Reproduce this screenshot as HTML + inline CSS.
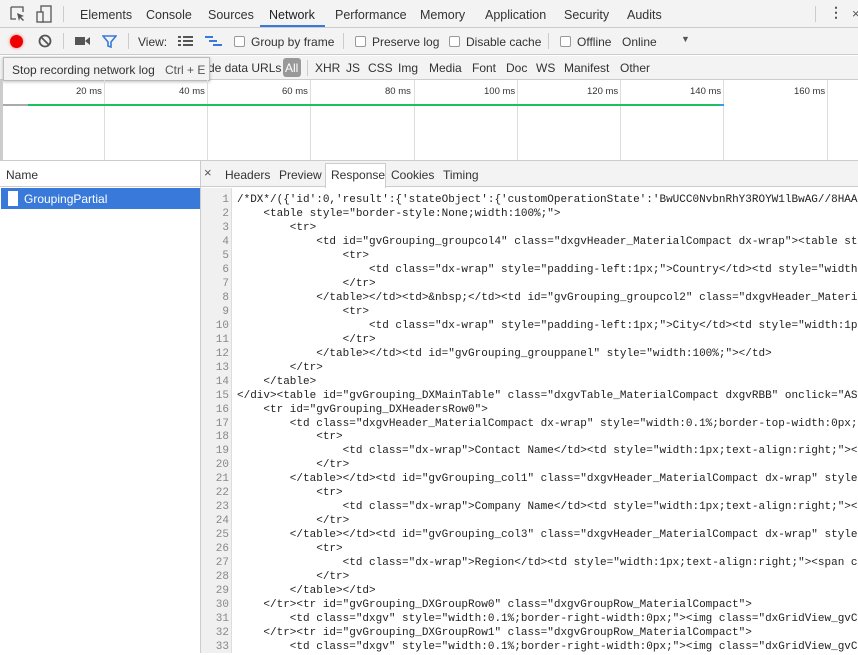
<!DOCTYPE html>
<html><head><meta charset="utf-8"><style>
*{box-sizing:border-box;margin:0;padding:0}
body{width:858px;height:653px;overflow:hidden;background:#fff;font-family:"Liberation Sans",sans-serif;font-size:12px;color:#333;position:relative}
.abs{position:absolute}
.t{position:absolute;white-space:nowrap}
.code{font-family:"Liberation Mono",monospace;font-size:11px;color:#222;white-space:pre;position:absolute;left:237px;top:194px;line-height:13.97px}
.nums{font-family:"Liberation Mono",monospace;font-size:11px;color:#888;white-space:pre;position:absolute;left:200px;width:29px;text-align:right;top:194px;line-height:13.97px}
.cb{position:absolute;width:11px;height:11px;border:1px solid #999;border-radius:2px;background:#fff}
.vsep{position:absolute;width:1px;background:#ccc}
</style></head><body>
<div class="abs" style="left:0;top:0;width:858px;height:28px;background:#f3f3f3;border-bottom:1px solid #ccc"></div>
<svg class="abs" style="left:10px;top:6px" width="16" height="16" viewBox="0 0 16 16"><path d="M1 1h12v5M1 1v12h5" fill="none" stroke="#555" stroke-width="1.3"/><path d="M7 7l7 3-3 1 3 3-1 1-3-3-1 3z" fill="#555"/></svg>
<svg class="abs" style="left:36px;top:5px" width="16" height="18" viewBox="0 0 16 18"><rect x="5" y="1" width="10" height="16" fill="none" stroke="#555" stroke-width="1.3"/><rect x="1" y="7" width="6" height="10" fill="#f3f3f3" stroke="#555" stroke-width="1.3"/></svg>
<div class="vsep" style="left:63px;top:6px;height:16px"></div>
<div class="t" style="left:80px;top:8px;font-size:12.5px">Elements</div>
<div class="t" style="left:146px;top:8px;font-size:12.5px">Console</div>
<div class="t" style="left:208px;top:8px;font-size:12.5px">Sources</div>
<div class="t" style="left:269px;top:8px;font-size:12.5px;color:#222">Network</div>
<div class="abs" style="left:260px;top:25px;width:65px;height:2px;background:#3879d9"></div>
<div class="t" style="left:335px;top:8px;font-size:12.5px">Performance</div>
<div class="t" style="left:420px;top:8px;font-size:12.5px">Memory</div>
<div class="t" style="left:485px;top:8px;font-size:12.5px">Application</div>
<div class="t" style="left:564px;top:8px;font-size:12.5px">Security</div>
<div class="t" style="left:627px;top:8px;font-size:12.5px">Audits</div>
<div class="vsep" style="left:815px;top:6px;height:16px"></div>
<div class="t" style="left:829px;top:4px;font-size:14px;font-weight:bold;color:#555">⋮</div>
<div class="t" style="left:852px;top:6px;font-size:13px;color:#555">×</div>
<div class="abs" style="left:0;top:28px;width:858px;height:27px;background:#f3f3f3;border-bottom:1px solid #ccc"></div>
<div class="abs" style="left:10px;top:35px;width:13px;height:13px;border-radius:50%;background:#e00;box-shadow:0 0 3px #f66"></div>
<svg class="abs" style="left:38px;top:34px" width="14" height="14" viewBox="0 0 14 14"><circle cx="7" cy="7" r="5.5" fill="none" stroke="#555" stroke-width="1.8"/><path d="M3 3l8 8" stroke="#555" stroke-width="1.8"/></svg>
<div class="vsep" style="left:63px;top:33px;height:16px"></div>
<svg class="abs" style="left:75px;top:36px" width="15" height="10" viewBox="0 0 15 10"><rect x="0" y="1" width="10" height="8" fill="#555"/><path d="M10 5l5-4v8z" fill="#555"/></svg>
<svg class="abs" style="left:102px;top:35px" width="15" height="13" viewBox="0 0 15 13"><path d="M1 1h13l-5 6v5l-3-1v-4z" fill="none" stroke="#3879d9" stroke-width="1.6"/></svg>
<div class="vsep" style="left:128px;top:33px;height:16px"></div>
<div class="t" style="left:138px;top:35px">View:</div>
<svg class="abs" style="left:178px;top:36px" width="15" height="10"><rect x="0" y="0" width="3" height="2" fill="#555"/><rect x="5" y="0" width="10" height="2" fill="#555"/><rect x="0" y="4" width="3" height="2" fill="#555"/><rect x="5" y="4" width="10" height="2" fill="#555"/><rect x="0" y="8" width="3" height="2" fill="#555"/><rect x="5" y="8" width="10" height="2" fill="#555"/></svg>
<svg class="abs" style="left:205px;top:36px" width="17" height="11"><rect x="0" y="0" width="8" height="2" fill="#3879d9"/><rect x="4" y="4" width="8" height="2" fill="#3879d9"/><rect x="8" y="8" width="9" height="2" fill="#3879d9"/></svg>
<div class="cb" style="left:234px;top:36px"></div>
<div class="t" style="left:251px;top:35px">Group by frame</div>
<div class="vsep" style="left:343px;top:33px;height:16px"></div>
<div class="cb" style="left:355px;top:36px"></div>
<div class="t" style="left:372px;top:35px">Preserve log</div>
<div class="cb" style="left:449px;top:36px"></div>
<div class="t" style="left:466px;top:35px">Disable cache</div>
<div class="vsep" style="left:548px;top:33px;height:16px"></div>
<div class="cb" style="left:560px;top:36px"></div>
<div class="t" style="left:577px;top:35px">Offline</div>
<div class="t" style="left:622px;top:35px">Online</div>
<div class="t" style="left:681px;top:34px;font-size:9px;color:#555">▼</div>
<div class="abs" style="left:0;top:56px;width:858px;height:24px;background:#f3f3f3;border-bottom:1px solid #ccc"></div>
<div class="t" style="left:208px;top:61px">de data URLs</div>
<div class="abs" style="left:283px;top:58px;width:18px;height:19px;border-radius:3px;background:#999"></div>
<div class="t" style="left:285px;top:61px;color:#fff">All</div>
<div class="vsep" style="left:307px;top:60px;height:16px"></div>
<div class="t" style="left:315px;top:61px">XHR</div>
<div class="t" style="left:346px;top:61px">JS</div>
<div class="t" style="left:368px;top:61px">CSS</div>
<div class="t" style="left:398px;top:61px">Img</div>
<div class="t" style="left:429px;top:61px">Media</div>
<div class="t" style="left:472px;top:61px">Font</div>
<div class="t" style="left:506px;top:61px">Doc</div>
<div class="t" style="left:536px;top:61px">WS</div>
<div class="t" style="left:564px;top:61px">Manifest</div>
<div class="t" style="left:620px;top:61px">Other</div>
<div class="abs" style="left:3px;top:57px;width:207px;height:24px;background:#f3f3f3;border:1px solid #bbb;box-shadow:0 1px 3px rgba(0,0,0,.25)"></div>
<div class="t" style="left:12px;top:63px">Stop recording network log</div>
<div class="t" style="left:165px;top:63px;color:#555">Ctrl + E</div>
<div class="abs" style="left:0;top:80px;width:3px;height:80px;background:#ccc"></div>
<div class="vsep" style="left:104px;top:80px;height:80px;background:#ddd"></div>
<div class="vsep" style="left:207px;top:80px;height:80px;background:#ddd"></div>
<div class="vsep" style="left:310px;top:80px;height:80px;background:#ddd"></div>
<div class="vsep" style="left:414px;top:80px;height:80px;background:#ddd"></div>
<div class="vsep" style="left:517px;top:80px;height:80px;background:#ddd"></div>
<div class="vsep" style="left:620px;top:80px;height:80px;background:#ddd"></div>
<div class="vsep" style="left:723px;top:80px;height:80px;background:#ddd"></div>
<div class="vsep" style="left:827px;top:80px;height:80px;background:#ddd"></div>
<div class="t" style="left:76px;top:86px;font-size:9.5px">20 ms</div>
<div class="t" style="left:179px;top:86px;font-size:9.5px">40 ms</div>
<div class="t" style="left:282px;top:86px;font-size:9.5px">60 ms</div>
<div class="t" style="left:385px;top:86px;font-size:9.5px">80 ms</div>
<div class="t" style="left:484px;top:86px;font-size:9.5px">100 ms</div>
<div class="t" style="left:587px;top:86px;font-size:9.5px">120 ms</div>
<div class="t" style="left:690px;top:86px;font-size:9.5px">140 ms</div>
<div class="t" style="left:794px;top:86px;font-size:9.5px">160 ms</div>
<div class="abs" style="left:3px;top:104px;width:25px;height:2px;background:#aaa"></div>
<div class="abs" style="left:28px;top:104px;width:692px;height:2px;background:#19c25a"></div>
<div class="abs" style="left:719px;top:104px;width:5px;height:2px;background:#3b9ae1"></div>
<div class="abs" style="left:0;top:160px;width:858px;height:1px;background:#ccc"></div>
<div class="abs" style="left:0;top:161px;width:200px;height:26px;border-bottom:1px solid #ccc"></div>
<div class="t" style="left:6px;top:168px">Name</div>
<div class="abs" style="left:1px;top:188px;width:199px;height:21px;background:#3879d9"></div>
<div class="abs" style="left:8px;top:191px;width:10px;height:15px;background:#fff"></div>
<div class="t" style="left:24px;top:192px;color:#fff">GroupingPartial</div>
<div class="abs" style="left:200px;top:161px;width:1px;height:492px;background:#ccc"></div>
<div class="abs" style="left:201px;top:161px;width:657px;height:26px;background:#f3f3f3;border-bottom:1px solid #ccc"></div>
<div class="t" style="left:204px;top:165px;font-size:13px;color:#555">×</div>
<div class="t" style="left:225px;top:168px">Headers</div>
<div class="t" style="left:279px;top:168px">Preview</div>
<div class="abs" style="left:325px;top:163px;width:61px;height:25px;background:#fff;border:1px solid #ccc;border-bottom:none"></div>
<div class="t" style="left:331px;top:168px">Response</div>
<div class="t" style="left:391px;top:168px">Cookies</div>
<div class="t" style="left:443px;top:168px">Timing</div>
<div class="abs" style="left:201px;top:188px;width:31px;height:465px;background:#f0f0f0;border-right:1px solid #ddd"></div>
<div class="nums">1
2
3
4
5
6
7
8
9
10
11
12
13
14
15
16
17
18
19
20
21
22
23
24
25
26
27
28
29
30
31
32
33</div>
<div class="code">/*DX*/({'id':0,'result':{'stateObject':{'customOperationState':'BwUCC0NvbnRhY3ROYW1lBwAG//8HAA
    &lt;table style="border-style:None;width:100%;"&gt;
        &lt;tr&gt;
            &lt;td id="gvGrouping_groupcol4" class="dxgvHeader_MaterialCompact dx-wrap"&gt;&lt;table st
                &lt;tr&gt;
                    &lt;td class="dx-wrap" style="padding-left:1px;"&gt;Country&lt;/td&gt;&lt;td style="width
                &lt;/tr&gt;
            &lt;/table&gt;&lt;/td&gt;&lt;td&gt;&amp;nbsp;&lt;/td&gt;&lt;td id="gvGrouping_groupcol2" class="dxgvHeader_Materi
                &lt;tr&gt;
                    &lt;td class="dx-wrap" style="padding-left:1px;"&gt;City&lt;/td&gt;&lt;td style="width:1p
                &lt;/tr&gt;
            &lt;/table&gt;&lt;/td&gt;&lt;td id="gvGrouping_grouppanel" style="width:100%;"&gt;&lt;/td&gt;
        &lt;/tr&gt;
    &lt;/table&gt;
&lt;/div&gt;&lt;table id="gvGrouping_DXMainTable" class="dxgvTable_MaterialCompact dxgvRBB" onclick="AS
    &lt;tr id="gvGrouping_DXHeadersRow0"&gt;
        &lt;td class="dxgvHeader_MaterialCompact dx-wrap" style="width:0.1%;border-top-width:0px;
            &lt;tr&gt;
                &lt;td class="dx-wrap"&gt;Contact Name&lt;/td&gt;&lt;td style="width:1px;text-align:right;"&gt;&lt;
            &lt;/tr&gt;
        &lt;/table&gt;&lt;/td&gt;&lt;td id="gvGrouping_col1" class="dxgvHeader_MaterialCompact dx-wrap" style
            &lt;tr&gt;
                &lt;td class="dx-wrap"&gt;Company Name&lt;/td&gt;&lt;td style="width:1px;text-align:right;"&gt;&lt;
            &lt;/tr&gt;
        &lt;/table&gt;&lt;/td&gt;&lt;td id="gvGrouping_col3" class="dxgvHeader_MaterialCompact dx-wrap" style
            &lt;tr&gt;
                &lt;td class="dx-wrap"&gt;Region&lt;/td&gt;&lt;td style="width:1px;text-align:right;"&gt;&lt;span c
            &lt;/tr&gt;
        &lt;/table&gt;&lt;/td&gt;
    &lt;/tr&gt;&lt;tr id="gvGrouping_DXGroupRow0" class="dxgvGroupRow_MaterialCompact"&gt;
        &lt;td class="dxgv" style="width:0.1%;border-right-width:0px;"&gt;&lt;img class="dxGridView_gvC
    &lt;/tr&gt;&lt;tr id="gvGrouping_DXGroupRow1" class="dxgvGroupRow_MaterialCompact"&gt;
        &lt;td class="dxgv" style="width:0.1%;border-right-width:0px;"&gt;&lt;img class="dxGridView_gvC</div>
</body></html>
